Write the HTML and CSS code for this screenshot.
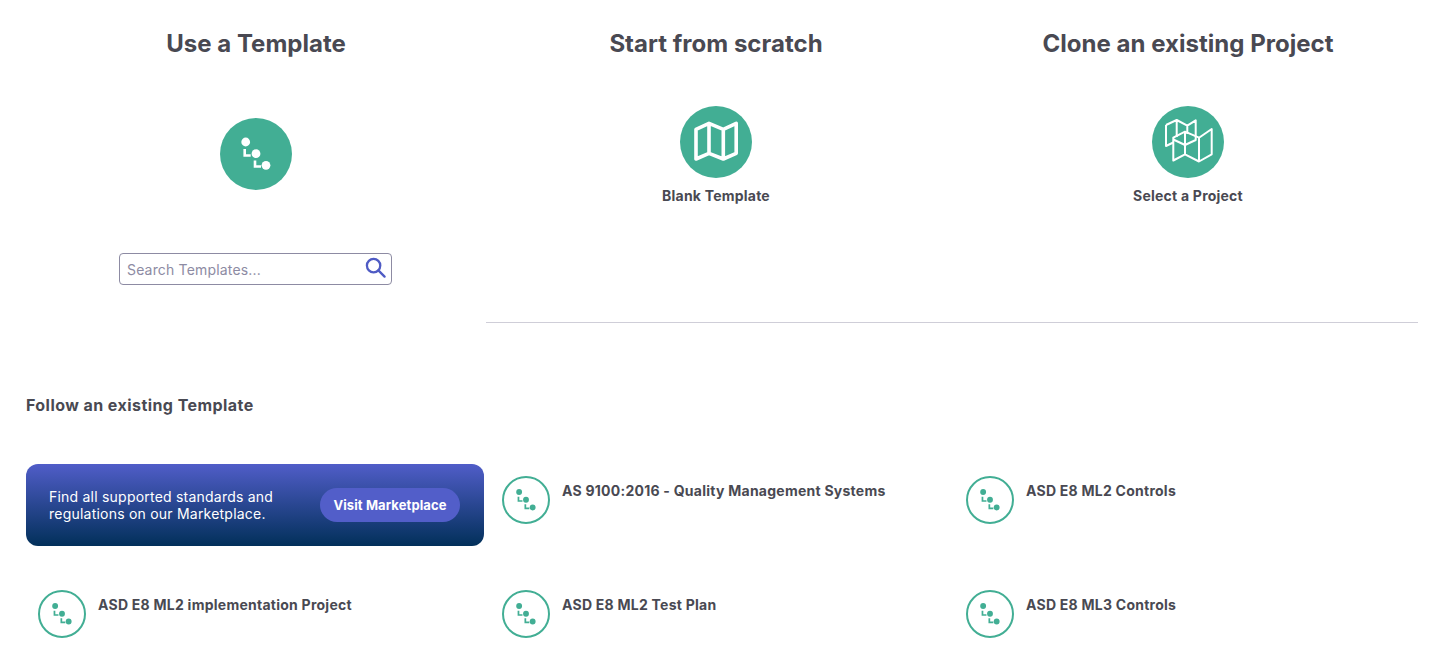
FILE: index.html
```html
<!DOCTYPE html>
<html lang="en">
<head>
<meta charset="utf-8">
<title>New Project</title>
<link rel="stylesheet" href="styles.css">
</head>
<body>
<svg class="defs" width="0" height="0" aria-hidden="true">
  <symbol id="steps" viewBox="0 0 72 72">
    <circle cx="25.7" cy="24" r="4.4"/>
    <circle cx="36" cy="35.7" r="4.4"/>
    <circle cx="46" cy="47.3" r="4.4"/>
    <path class="ell" d="M24.7 31v6.500h6M35 42.500v6h6"/>
  </symbol>
</svg>
<main class="page">
  <section class="options">
    <div class="option option-template">
      <h2 class="option-title">Use a Template</h2>
      <span class="badge badge-low"><svg class="badge-svg white" viewBox="0 0 72 72"><use href="#steps"/></svg></span>
      <label class="search">
        <input class="search-input" type="text" placeholder="Search Templates...">
        <svg class="search-icon" viewBox="0 0 22 22"><circle cx="9" cy="9" r="7"/><path d="M14 14l6.500 6.500"/></svg>
      </label>
    </div>
    <div class="options-right">
      <div class="option-pair">
        <div class="option">
          <h2 class="option-title">Start from scratch</h2>
          <span class="badge"><svg class="badge-svg map" viewBox="0 0 72 72"><path d="M16 23.300 29 17.300 43.300 23.300 56.200 17.300V47.300L43.300 53 29 47.300 16 53ZM29 17.300V47.300M43.300 23.300V53"/></svg></span>
          <span class="option-label">Blank Template</span>
        </div>
        <div class="option">
          <h2 class="option-title">Clone an existing Project</h2>
          <span class="badge"><svg class="badge-svg map thin" viewBox="0 0 72 72"><path d="M14 19 24.700 14 35.300 19.700 43.700 14.300V34L33 39 21.300 33.500M14 19V40L21.300 36.500M24.700 14V31M35.300 19.700V28"/><path d="M21.300 31.700 33 25.700 47 31.700 59.700 23V48.300L47 55.500 33 48.300 21.300 54.500ZM33 25.700V48.300M47 31.700V55.500"/></svg></span>
          <span class="option-label">Select a Project</span>
        </div>
      </div>
      <hr class="divider">
    </div>
  </section>
  <h3 class="list-title">Follow an existing Template</h3>
  <section class="list">
    <div class="banner">
      <p class="banner-text">Find all supported standards and regulations on our Marketplace.</p>
      <span class="banner-btn">Visit Marketplace</span>
    </div>
    <div class="item"><span class="ring"><svg class="ring-svg" viewBox="0 0 72 72"><use href="#steps"/></svg></span><span class="item-name">AS 9100:2016 - Quality Management Systems</span></div>
    <div class="item"><span class="ring"><svg class="ring-svg" viewBox="0 0 72 72"><use href="#steps"/></svg></span><span class="item-name">ASD E8 ML2 Controls</span></div>
    <div class="item"><span class="ring"><svg class="ring-svg" viewBox="0 0 72 72"><use href="#steps"/></svg></span><span class="item-name">ASD E8 ML2 implementation Project</span></div>
    <div class="item"><span class="ring"><svg class="ring-svg" viewBox="0 0 72 72"><use href="#steps"/></svg></span><span class="item-name">ASD E8 ML2 Test Plan</span></div>
    <div class="item"><span class="ring"><svg class="ring-svg" viewBox="0 0 72 72"><use href="#steps"/></svg></span><span class="item-name">ASD E8 ML3 Controls</span></div>
  </section>
</main>
</body>
</html>
```
FILE: styles.css
```css
* { box-sizing: border-box; }
html, body { margin: 0; background: #fff; }
body { font-family: Inter, "Liberation Sans", sans-serif; color: #494952; height: 671px; overflow: hidden; }
.defs { position: absolute; }
.page { padding: 0 26px; }
.options { display: grid; grid-template-columns: 460px 932px; }
.options-right { display: flex; flex-direction: column; }
.option-pair { display: grid; grid-template-columns: 460px 460px; gap: 12px; height: 322px; }
.option { display: flex; flex-direction: column; align-items: center; }
.option-title { margin: 29px 0 0; font-size: 24px; line-height: 29px; font-weight: 700; letter-spacing: 0.02px; }
.badge { width: 72px; height: 72px; border-radius: 50%; background: #42ae94; margin-top: 48px; display: block; flex: none; }
.badge-low { margin-top: 60px; }
.badge-svg { width: 72px; height: 72px; display: block; }
.white { fill: #fff; stroke: #fff; }
#steps .ell { fill: none; stroke-width: 2.6; }
#steps circle { stroke: none; }
.map { fill: none; stroke: #fff; stroke-width: 3.6; stroke-linejoin: round; }
.thin { stroke-width: 2; }
.option-label { margin-top: 9px; font-size: 14px; line-height: 17px; font-weight: 700; letter-spacing: 0.22px; }
.search { margin-top: 63px; align-self: flex-start; margin-left: 93px; width: 273px; height: 32px; border: 1px solid #8d8ba3; border-radius: 4px; display: flex; align-items: center; padding: 0 5px 0 7px; }
.search-input { flex: 1; min-width: 0; border: 0; outline: 0; padding: 0; background: transparent; font: 400 14px Inter, sans-serif; letter-spacing: 0.17px; color: #494952; }
.search-input::placeholder { color: #8d8ba3; opacity: 1; }
.search-icon { width: 21px; height: 21px; fill: none; stroke: #4f5bc4; stroke-width: 2.4; stroke-linecap: round; margin-top: -3px; }
.divider { margin: 0; border: 0; height: 1px; background: #cfced8; }
.list-title { margin: 73px 0 0; font-size: 16px; line-height: 19px; font-weight: 700; letter-spacing: 0.44px; }
.list { display: grid; grid-template-columns: repeat(3, 458px); column-gap: 6px; row-gap: 32px; margin-top: 49px; }
.banner { height: 82px; border-radius: 12px; background: linear-gradient(#505dc8, #02305a); display: flex; align-items: center; justify-content: space-between; padding: 0 24px 0 23px; color: #fff; }
.banner-text { margin: 0; width: 250px; font-size: 14px; line-height: 17px; letter-spacing: 0.22px; }
.banner-btn { background: #525ec9; border-radius: 17px; height: 34px; width: 140px; display: flex; align-items: center; justify-content: center; font-size: 13px; font-weight: 700; letter-spacing: 0.1px; }
.item { height: 82px; padding: 12px; display: flex; align-items: flex-start; gap: 12px; }
.ring { width: 48px; height: 48px; border: 2px solid #42ae94; border-radius: 50%; flex: none; display: block; }
.ring-svg { display: block; width: 48px; height: 48px; margin: -2px; fill: #42ae94; stroke: #42ae94; }
.item-name { margin-top: 7px; font-size: 14px; line-height: 16px; font-weight: 700; letter-spacing: 0.25px; }
```
